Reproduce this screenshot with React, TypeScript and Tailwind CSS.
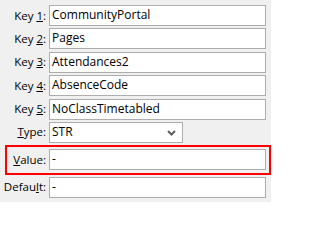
import React from "react";

const font = { fontFamily: '"Open Sans", "Noto Sans", Arial, sans-serif' };

function Label({ pre, u, post, w = "w-[46px]" }: { pre: string; u: string; post: string; w?: string }) {
  return (
    <div className={`${w} shrink-0 text-right text-[11.5px] leading-[14px] text-black whitespace-pre`}>
      {pre}
      <span className="underline underline-offset-[1px]">{u}</span>
      {post}
    </div>
  );
}

function Field({ value }: { value: string }) {
  return (
    <div className="ml-[3px] h-[21px] w-[217px] border border-[#adadad] bg-white pl-[2px] text-[12px] leading-[18px] text-black">
      {value}
    </div>
  );
}

export default function App() {
  const keys = ["CommunityPortal", "Pages", "Attendances2", "AbsenceCode", "NoClassTimetabled"];
  return (
    <div style={font} className="w-[271px] h-[202px] bg-[#f0f0f0] pt-[5px] flex flex-col overflow-hidden">
      <div className="flex flex-col gap-[2.4px]">
        {keys.map((k, i) => (
          <div key={k} className="flex items-center">
            <Label pre="Key " u={String(i + 1)} post=":" />
            <Field value={k} />
          </div>
        ))}
        <div className="flex items-center">
          <Label pre="" u="T" post="ype:" />
          <div className="ml-[3px] h-[21px] w-[134px] border border-[#adadad] bg-white pl-[2px] pr-[6px] flex items-center justify-between text-[12px] text-black">
            <span className="leading-[18px]">STR</span>
            <svg width="9" height="6" viewBox="0 0 9 6" className="mt-[1px]">
              <path d="M1 1 L4.5 4.5 L8 1" fill="none" stroke="#606060" strokeWidth="2" />
            </svg>
          </div>
        </div>
      </div>
      <div className="mt-[2px] ml-[5px] w-[266px] h-[30px] border-2 border-[#ff0000] flex items-center">
        <Label pre="" u="V" post="alue:" w="w-[39px]" />
        <Field value="-" />
      </div>
      <div className="mt-[2px] flex items-center">
        <Label pre="Defau" u="l" post="t:" />
        <Field value="-" />
      </div>
    </div>
  );
}
